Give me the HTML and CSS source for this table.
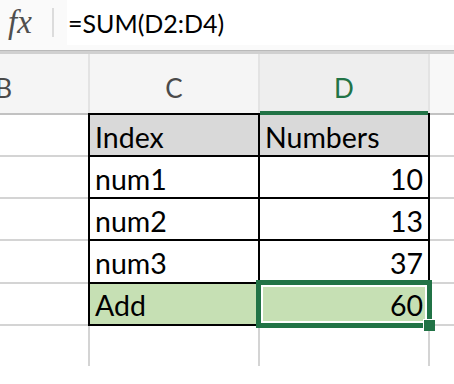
FILE: index.html
```html
<!DOCTYPE html>
<html lang="en">
<head>
    <meta charset="UTF-8">
    <title>Sheet - SUM</title>
    <link rel="stylesheet" href="styles.css">
</head>
<body>

    <!-- Formula bar -->
    <div class="formula-bar">
        <span class="fx">fx</span>
        <span class="fx-sep"></span>
        <div class="formula">=SUM(D2:D4)</div>
    </div>

    <!-- Column headers -->
    <div class="col-heads">
        <div class="col-head cut">B</div>
        <div class="col-head">C</div>
        <div class="col-head active">D</div>
        <div class="col-head"></div>
    </div>

    <!-- Grid body -->
    <div class="sheet">
        <div class="data-table">
            <div class="cell head">Index</div>
            <div class="cell head">Numbers</div>
            <div class="cell">num1</div>
            <div class="cell num">10</div>
            <div class="cell">num2</div>
            <div class="cell num">13</div>
            <div class="cell">num3</div>
            <div class="cell num">37</div>
            <div class="cell total">Add</div>
            <div class="cell num total selected">60</div>
        </div>

        <div class="blank"></div><div class="blank"></div>
        <div class="blank"></div><div class="blank"></div>
        <div class="blank"></div><div class="blank"></div>
        <div class="blank"></div><div class="blank"></div>
        <div class="blank"></div><div class="blank"></div>
        <div class="blank"></div><div class="blank"></div>
        <div class="blank"></div><div class="blank"></div>
    </div>

</body>
</html>
```

FILE: styles.css
```css
* {
    margin: 0;
    padding: 0;
    box-sizing: border-box;
}
html, body {
    overflow: hidden;
}
body {
    background: #fff;
    font-family: 'Lato', 'Open Sans', sans-serif;
    color: #000;
}

/* formula bar */
.formula-bar {
    display: flex;
    align-items: center;
    height: 54px;
    padding-bottom: 6px;
    background: #fafafa;
    border-bottom: 3px solid #d0d0d0;
    box-shadow: inset 0 -1px 0 #b9b9b9;
}
.fx {
    font-family: 'Liberation Serif', serif;
    font-style: italic;
    font-size: 33px;
    color: #4f4f4f;
    width: 52px;
    padding-left: 8px;
    line-height: 1;
}
.fx-sep {
    width: 2px;
    height: 29px;
    background: #dcdcdc;
    margin-right: 13px;
}
.formula {
    flex: 1;
    align-self: stretch;
    display: flex;
    align-items: center;
    padding-left: 1px;
    padding-top: 2px;
    background: #fff;
    font-size: 25px;
    line-height: 1;
}

/* column headers */
.col-heads {
    display: grid;
    grid-template-columns: 88px 168px 168px 1fr;
    column-gap: 2px;
    background: #e3e3e3;
    height: 61px;
}
.col-head {
    display: flex;
    justify-content: center;
    align-items: center;
    padding-top: 9px;
    background: #f5f5f5;
    border-bottom: 2px solid #c2c2c2;
    font-size: 26px;
    line-height: 1;
    color: #4a4a4a;
}
.col-head.cut {
    justify-content: flex-end;
    padding-right: 76px;
}
.col-head.active {
    position: relative;
    background: #eeeeee;
    color: #217346;
    border-bottom-color: #217346;
    box-shadow: inset 0 -2px 0 #217346;
}
.col-head:last-child {
    background: #f8f8f8;
}

/* grid body */
.sheet {
    display: grid;
    grid-template-columns: 88px 168px 168px 1fr;
    grid-auto-rows: 40.14px;
    gap: 2px;
    background: #d4d4d4;
}
.blank {
    background: #fff;
}
.data-table {
    grid-column: 2 / 4;
    grid-row: 1 / 6;
    margin: -2px;
    padding: 2px;
    display: grid;
    grid-template-columns: 168px 168px;
    grid-auto-rows: 40.14px;
    gap: 2px;
    background: #000;
}
.cell {
    display: flex;
    align-items: flex-end;
    padding: 0 5px 4px;
    background: #fff;
    font-size: 28.5px;
    line-height: 1;
}
.cell.num {
    justify-content: flex-end;
}
.cell.head {
    background: #d9d9d9;
}
.cell.total {
    background: #c6e0b4;
}
.cell.selected {
    position: relative;
}
.cell.selected::before {
    content: '';
    position: absolute;
    top: -4px;
    left: -4px;
    right: -4px;
    bottom: -4px;
    border: 5px solid #217346;
    box-shadow: inset 0 0 0 2px #fff;
}
.cell.selected::after {
    content: '';
    position: absolute;
    right: -7px;
    bottom: -7px;
    width: 11px;
    height: 11px;
    background: #217346;
    border-top: 1px solid #fff;
    border-left: 1px solid #fff;
}
```
